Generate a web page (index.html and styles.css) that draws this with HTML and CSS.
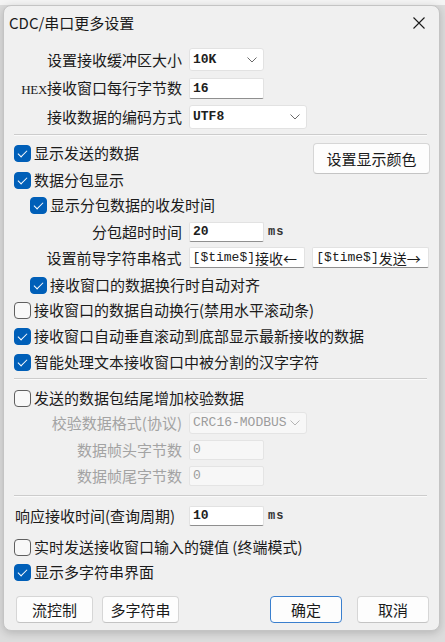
FILE: index.html
```html
<!DOCTYPE html>
<html lang="zh-CN">
<head>
<meta charset="utf-8">
<title>CDC/串口更多设置</title>
<link rel="stylesheet" href="styles.css">
</head>
<body>
<div class="backdrop">
  <div class="dialog">
    <div class="titlebar">
      <span class="title">CDC/串口更多设置</span>
      <svg class="close" width="12" height="12" viewBox="0 0 12 12"><path d="M0.5 0.5 L11.5 11.5 M11.5 0.5 L0.5 11.5" stroke="#1b1b1b" stroke-width="1.1" fill="none"/></svg>
    </div>
    <div class="body">
      <div class="frow h23">
        <span class="lbl">设置接收缓冲区大小</span>
        <div class="select w75"><span class="val">10K</span><svg class="chev" width="10" height="6" viewBox="0 0 10 6"><path d="M0.5 0.5 L5 5 L9.5 0.5" stroke="#6a6a6a" fill="none"/></svg></div>
      </div>
      <div class="frow h21 mt7">
        <span class="lbl"><span class="hex">HEX</span>接收窗口每行字节数</span>
        <div class="input w75"><span class="val">16</span></div>
      </div>
      <div class="frow h24 mt6">
        <span class="lbl">接收数据的编码方式</span>
        <div class="select w118"><span class="val">UTF8</span><svg class="chev" width="10" height="6" viewBox="0 0 10 6"><path d="M0.5 0.5 L5 5 L9.5 0.5" stroke="#6a6a6a" fill="none"/></svg></div>
      </div>
      <div class="sep mt5"></div>

      <div class="split mt8">
        <div class="col">
          <label class="cb"><span class="box on"></span>显示发送的数据</label>
          <label class="cb mt7"><span class="box on"></span>数据分包显示</label>
        </div>
        <button class="btn color">设置显示颜色</button>
      </div>
      <label class="cb indent mt5"><span class="box on"></span>显示分包数据的收发时间</label>
      <div class="frow h20 mt7">
        <span class="lbl">分包超时时间</span>
        <div class="input w75"><span class="val">20</span></div>
        <span class="unit">ms</span>
      </div>
      <div class="frow h21 mt5">
        <span class="lbl">设置前导字符串格式</span>
        <div class="input w117"><span class="val plain">[$time$]</span><span class="cjk">接收←</span></div>
        <div class="input w117 ml7"><span class="val plain">[$time$]</span><span class="cjk">发送→</span></div>
      </div>
      <label class="cb indent mt7"><span class="box on"></span>接收窗口的数据换行时自动对齐</label>
      <label class="cb mt5"><span class="box"></span>接收窗口的数据自动换行(禁用水平滚动条)</label>
      <label class="cb mt6"><span class="box on"></span>接收窗口自动垂直滚动到底部显示最新接收的数据</label>
      <label class="cb mt6"><span class="box on"></span>智能处理文本接收窗口中被分割的汉字字符</label>
      <div class="sep mt6"></div>

      <label class="cb mt9"><span class="box"></span>发送的数据包结尾增加校验数据</label>
      <div class="frow h22 mt4 disabled">
        <span class="lbl">校验数据格式(协议)</span>
        <div class="select w118"><span class="val">CRC16-MODBUS</span><svg class="chev" width="10" height="6" viewBox="0 0 10 6"><path d="M0.5 0.5 L5 5 L9.5 0.5" stroke="#b5b5b5" fill="none"/></svg></div>
      </div>
      <div class="frow h20 mt6 disabled">
        <span class="lbl">数据帧头字节数</span>
        <div class="input w75"><span class="val">0</span></div>
      </div>
      <div class="frow h20 mt6 disabled">
        <span class="lbl">数据帧尾字节数</span>
        <div class="input w75"><span class="val">0</span></div>
      </div>
      <div class="sep mt9"></div>

      <div class="frow h20 mt10">
        <span class="lbl left">响应接收时间(查询周期)</span>
        <div class="input w75"><span class="val">10</span></div>
        <span class="unit">ms</span>
      </div>
      <label class="cb mt11"><span class="box"></span>实时发送接收窗口输入的键值 (终端模式)</label>
      <label class="cb mt5"><span class="box on"></span>显示多字符串界面</label>

      <div class="footer mt14">
        <button class="btn fb">流控制</button>
        <button class="btn fb ml9">多字符串</button>
        <span class="grow"></span>
        <button class="btn fb2 default">确定</button>
        <button class="btn fb2 ml15">取消</button>
      </div>
    </div>
  </div>
</div>
</body>
</html>
```

FILE: styles.css
```css
* { box-sizing: border-box; }
html, body { margin: 0; padding: 0; }
body {
  width: 445px;
  height: 642px;
  overflow: hidden;
  background: #e6e6e6;
  font-family: "Noto Sans CJK SC", "Noto Sans", sans-serif;
  color: #1b1b1b;
}
.backdrop {
  width: 445px;
  height: 642px;
  padding: 5px 0 0 3px;
  background: linear-gradient(#f4f4f4, #f4f4f4) 0 0 / 100% 5px no-repeat, #dcdcdc;
}
.dialog {
  width: 437px;
  height: 626px;
  background: #f0f0f0;
  border: 1px solid #c4c4c4;
  border-radius: 8px;
  box-shadow: 0 2px 8px rgba(0,0,0,0.18);
  overflow: hidden;
}
.titlebar {
  height: 31px;
  display: flex;
  align-items: center;
  padding: 2px 14px 0 5px;
}
.title { font-size: 15px; line-height: 20px; flex: 1; }
.close { display: block; }

.body { padding: 11px 10px 0 10px; }

.frow { display: flex; align-items: center; font-size: 15px; }
.h20 { height: 20px; }
.h21 { height: 21px; }
.h22 { height: 22px; }
.h23 { height: 23px; }
.h24 { height: 24px; }
.lbl {
  width: 168px;
  margin-right: 7px;
  text-align: right;
  white-space: nowrap;
  line-height: 20px;
}
.lbl.left { text-align: left; margin-left: 1px; width: 167px; }
.hex { font-family: "Liberation Serif", serif; font-size: 13px; letter-spacing: -0.3px; }

.select, .input {
  height: 100%;
  display: flex;
  align-items: center;
  background: #ffffff;
  border: 1px solid #e2e2e2;
  border-radius: 3px;
  padding-left: 3px;
  white-space: nowrap;
  overflow: hidden;
}
.input { border-bottom-color: #8f8f8f; border-radius: 2px; }
.select { justify-content: space-between; padding-right: 6px; }
.w75 { width: 75px; }
.w117 { width: 117px; }
.w118 { width: 118px; }
.val {
  font-family: "Liberation Mono", monospace;
  font-size: 13px;
  font-weight: bold;
  color: #202020;
  line-height: 16px;
}
.val.plain { font-weight: normal; }
.cjk { font-size: 14px; line-height: 18px; }
.chev { display: block; }
.unit {
  margin-left: 4px;
  font-family: "Liberation Mono", monospace;
  font-size: 12px;
  font-weight: bold;
  letter-spacing: 1px;
  color: #333;
}
.disabled .lbl { color: #a3a3a3; }
.disabled .select, .disabled .input { background: #f7f7f7; border-color: #e4e4e4; }
.disabled .val { color: #9c9c9c; font-weight: normal; }

.sep { height: 1px; width: 413px; background: #cccccc; box-shadow: 0 1px 0 #fafafa; }

.split { display: flex; justify-content: space-between; align-items: flex-start; }
.col { display: flex; flex-direction: column; }

.cb {
  display: flex;
  align-items: center;
  height: 20px;
  font-size: 15px;
  line-height: 20px;
  white-space: nowrap;
}
.cb.indent { padding-left: 16px; }
.box {
  width: 17px;
  height: 17px;
  border: 1px solid #5f5f5f;
  border-radius: 4px;
  background: #f8f8f8;
  margin-right: 3px;
  flex: none;
  position: relative;
}
.box.on { background: #005fb8; border-color: #005fb8; }
.box.on::after {
  content: "";
  position: absolute;
  left: 5px;
  top: 2px;
  width: 4px;
  height: 8px;
  border: solid #ffffff;
  border-width: 0 1.5px 1.5px 0;
  transform: rotate(45deg);
}

.btn {
  font-family: "Noto Sans CJK SC", sans-serif;
  font-size: 15px;
  color: #1b1b1b;
  background: #fdfdfd;
  border: 1px solid #d6d6d6;
  border-bottom-color: #c4c4c4;
  border-radius: 4px;
  padding: 0;
  line-height: 20px;
}
.color { width: 117px; height: 31px; margin-right: -1px; }
.footer { display: flex; align-items: center; padding-left: 2px; }
.fb { width: 77px; height: 27px; }
.fb2 { width: 72px; height: 27px; }
.default { border: 1px solid #3a7fce; }
.grow { flex: 1; }

.mt4 { margin-top: 4px; }
.mt5 { margin-top: 5px; }
.mt6 { margin-top: 6px; }
.mt7 { margin-top: 7px; }
.mt8 { margin-top: 8px; }
.mt9 { margin-top: 9px; }
.mt10 { margin-top: 10px; }
.mt11 { margin-top: 11px; }
.mt14 { margin-top: 14px; }
.ml7 { margin-left: 7px; }
.ml9 { margin-left: 9px; }
.ml15 { margin-left: 15px; }
```
